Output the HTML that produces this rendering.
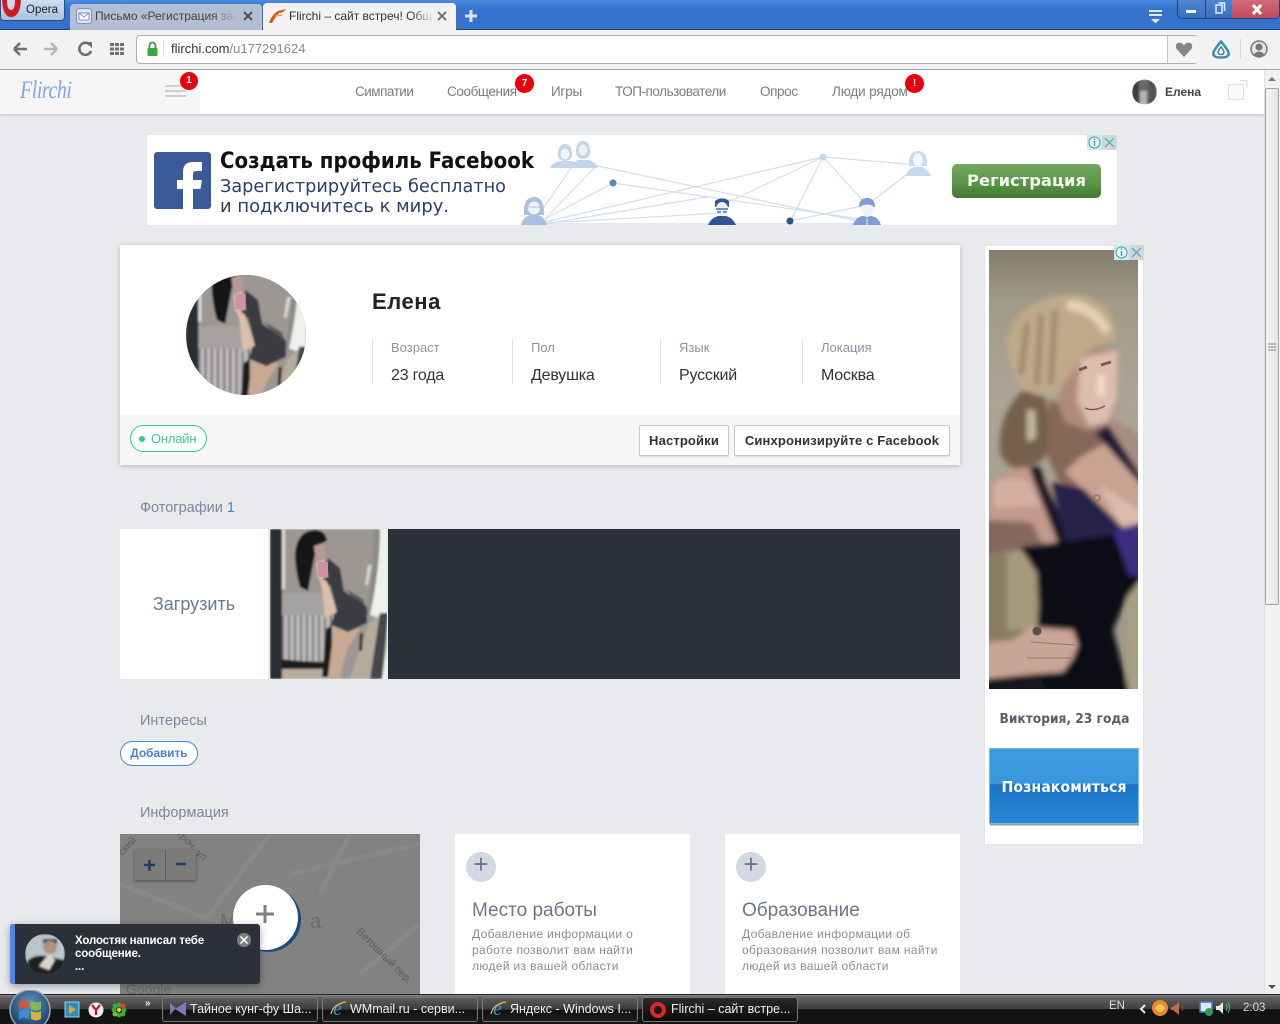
<!DOCTYPE html>
<html lang="ru"><head><meta charset="utf-8"><title>Flirchi</title>
<style>
html,body{margin:0;padding:0;width:1280px;height:1024px;overflow:hidden;background:#e8eaee;font-family:"Liberation Sans","Noto Sans CJK SC",sans-serif}
div,span,svg{position:absolute}
.t{white-space:nowrap;line-height:1}
.nav{top:84px;font-size:13.5px;color:#787d85;white-space:nowrap;line-height:15px;letter-spacing:-.4px}
.badge{width:18px;height:18px;border-radius:50%;background:#e8000f;color:#fff;font-size:10px;font-weight:bold;text-align:center;line-height:18px}
.lab{top:340px;font-size:13px;color:#8a94a6;line-height:15px;white-space:nowrap}
.val{top:367px;font-size:16px;color:#333;line-height:18px;white-space:nowrap;letter-spacing:-.2px}
.div{top:339px;width:1px;height:45px;background:#dfe2e6}
.btn{top:425px;height:29px;background:#fff;border:1px solid #c9c9c9;border-radius:2px;box-shadow:0 1px 1px #ddd;font-size:13px;font-weight:bold;color:#333;text-align:center;line-height:29px;white-space:nowrap;letter-spacing:.15px}
.sec{left:140px;font-size:14.5px;color:#7d8799;line-height:16px;white-space:nowrap}
.card{top:834px;width:235px;height:160px;background:#fff}
.plus{top:852px;width:30px;height:30px;border-radius:50%;background:#d3d9e2;color:#66768c;font-size:26px;line-height:25px;text-align:center}
.h{top:900px;font-size:19px;color:#6c7686;line-height:22px;white-space:nowrap}
.d{font-size:12px;color:#868e9c;line-height:16px;white-space:nowrap;letter-spacing:.35px;top:926px}
.win{top:997px;width:154px;height:23px;border:1px solid #777;border-radius:3px;background:linear-gradient(#5d5d5d 0,#3a3a3a 50%,#111 52%,#1c1c1c 100%)}
.wt{top:1003px;font-size:12.5px;color:#eee;white-space:nowrap;line-height:1}
.ic{width:15px;height:15px;top:135px;background:#cfdadd}
</style></head><body>

<!-- browser chrome -->
<div style="left:0;top:0;width:1280px;height:30px;background:linear-gradient(#4a8bdc 0,#3774cd 25%,#3470c9 100%);border-bottom:1px solid #20457c;box-sizing:border-box"></div>
<div style="left:0;top:0;width:65px;height:21px;background:linear-gradient(#cfdff2,#a9c0de);border:1px solid #2a4c80;border-top:0;border-radius:0 0 4px 4px;box-sizing:border-box"></div>
<svg style="left:0;top:0" width="24" height="20"><path d="M2 0 Q3 17 11 17 Q20 17 21 0 L15 0 Q15 10 11 10 Q7 10 7 0Z" fill="#d5171f"/></svg>
<div class="t" style="left:26px;top:5px;font-size:11.5px;color:#222">Opera</div>
<div style="left:70px;top:4px;width:192px;height:26px;background:#b2bfd2;border-radius:4px 4px 0 0"></div>
<svg style="left:76px;top:8px" width="16" height="16"><rect x=".5" y=".5" width="15" height="15" rx="3" fill="#dfe6f5" stroke="#7d8fc4"/><rect x="3" y="5" width="10" height="7" fill="#fff" stroke="#7d8fc4"/><path d="M3 5l5 4 5-4" fill="none" stroke="#7d8fc4"/></svg>
<div class="t" style="left:95px;top:10px;width:140px;overflow:hidden;font-size:12px;color:#444">Письмо «Регистрация зав</div>
<div style="left:212px;top:8px;width:25px;height:16px;background:linear-gradient(90deg,rgba(178,191,210,0),#b2bfd2)"></div>
<svg style="left:243px;top:11px" width="10" height="10"><path d="M1 1l8 8M9 1l-8 8" stroke="#555" stroke-width="2"/></svg>
<div style="left:263px;top:3px;width:193px;height:28px;background:#f2f2f2;border-radius:4px 4px 0 0"></div>
<svg style="left:269px;top:8px" width="17" height="15"><path d="M0 15 Q3 6 9 3 L17 1 Q14 5 10 5 Q7 8 3 15Z" fill="#e0521c"/><path d="M6 8 L13 7" stroke="#f0a030" stroke-width="1.5"/></svg>
<div class="t" style="left:289px;top:10px;width:145px;overflow:hidden;font-size:12px;color:#333">Flirchi – сайт встреч! Общ</div>
<div style="left:412px;top:8px;width:22px;height:16px;background:linear-gradient(90deg,rgba(242,242,242,0),#f2f2f2)"></div>
<svg style="left:437px;top:11px" width="10" height="10"><path d="M1 1l8 8M9 1l-8 8" stroke="#777" stroke-width="2"/></svg>
<svg style="left:465px;top:10px" width="12" height="12"><path d="M6 0v12M0 6h12" stroke="#d5e4f7" stroke-width="3"/></svg>
<svg style="left:1148px;top:10px" width="15" height="14"><path d="M1 1h13M1 5h13" stroke="#dbe8f8" stroke-width="2"/><path d="M3 9h9l-4.500 4.500z" fill="#dbe8f8"/></svg>
<div style="left:1177px;top:0;width:103px;height:19px;background:linear-gradient(#4c86d4,#3a6fc0);border:1px solid #20457c;border-top:0;border-radius:0 0 5px 5px;box-sizing:border-box"></div>
<div style="left:1232px;top:0;width:47px;height:18px;background:linear-gradient(#d26a78,#c44a5e);border-radius:0 0 4px 0"></div>
<div style="left:1205px;top:0;width:1px;height:18px;background:#20457c"></div>
<svg style="left:1185px;top:2px" width="90" height="14"><rect x="1" y="8" width="10" height="3" fill="#fff"/><rect x="31" y="3" width="6" height="8" fill="none" stroke="#e6eef8" stroke-width="1.500"/><path d="M33.500 1h6v8" fill="none" stroke="#e6eef8" stroke-width="1.500"/><path d="M68 3l8 9M76 3l-8 9" stroke="#fff" stroke-width="3"/></svg>

<div style="left:0;top:30px;width:1280px;height:40px;background:#f2f2f2;border-bottom:1px solid #a9a9a9;box-sizing:border-box"></div>
<svg style="left:13px;top:41px" width="115" height="16"><path d="M1 8h13M1 8l6-6M1 8l6 6" stroke="#6f6f6f" stroke-width="2.600" fill="none"/><path d="M44 8h-13M44 8l-6-6M44 8l-6 6" stroke="#b5b5b5" stroke-width="2.600" fill="none"/><path d="M77 4a6 6 0 1 0 1 6" stroke="#6f6f6f" stroke-width="2.600" fill="none"/><path d="M73 1h6v6z" fill="#6f6f6f"/><g fill="#6f6f6f"><rect x="97" y="2" width="4" height="3"/><rect x="102" y="2" width="4" height="3"/><rect x="107" y="2" width="4" height="3"/><rect x="97" y="6.500" width="4" height="3"/><rect x="102" y="6.500" width="4" height="3"/><rect x="107" y="6.500" width="4" height="3"/><rect x="97" y="11" width="4" height="3"/><rect x="102" y="11" width="4" height="3"/><rect x="107" y="11" width="4" height="3"/></g></svg>
<div style="left:136px;top:35px;width:1062px;height:29px;background:#fff;border:1px solid #b0b0b0;border-radius:4px;box-sizing:border-box"></div>
<div style="left:1167px;top:36px;width:30px;height:27px;background:#f4f4f4;border-left:1px solid #c4c4c4;border-radius:0 3px 3px 0"></div>
<svg style="left:146px;top:41px" width="13" height="16"><path d="M3.500 7V4.500a3 3 0 0 1 6 0V7" fill="none" stroke="#3a9a3e" stroke-width="1.800"/><rect x="1.500" y="7" width="10" height="8" rx="1" fill="#3aa63f"/></svg>
<div style="left:163px;top:41px;width:1px;height:16px;background:#ddd"></div>
<div class="t" style="left:171px;top:42px;font-size:13px;color:#333">flirchi.com<span style="position:static;color:#888">/u177291624</span></div>
<svg style="left:1175px;top:42px" width="18" height="15"><path d="M9 15 L1.500 7 Q-.5 2 3.500 .8 Q7 0 9 3.500 Q11 0 14.500 .8 Q18.500 2 16.500 7Z" fill="#858585"/></svg>
<svg style="left:1211px;top:39px" width="20" height="21"><path d="M10 2.500 Q14 7 17 12 Q20 18.500 10 18.500 Q0 18.500 3 12 Q6 7 10 2.500Z" fill="#eef4f5" stroke="#3f8ea2" stroke-width="2.500"/><path d="M10 8 Q12.500 11 13 13 Q13 15.500 10 15.500 Q7 15.500 7 13 Q7.500 11 10 8Z" fill="#f8f8f8" stroke="#4a7f96" stroke-width="1.500"/></svg>
<div style="left:1240px;top:39px;width:1px;height:20px;background:#d6d6d6"></div>
<svg style="left:1250px;top:40px" width="18" height="18"><circle cx="9" cy="9" r="8" fill="#e4e4e4" stroke="#777" stroke-width="1.500"/><circle cx="9" cy="7" r="3.500" fill="#777"/><path d="M3 15 Q9 8 15 15 Q9 18.500 3 15Z" fill="#777"/></svg>

<!-- site nav -->
<div style="left:0;top:70px;width:1264px;height:44px;background:#fff;box-shadow:0 1px 3px rgba(0,0,0,.18)"></div>
<div style="left:0;top:70px;width:200px;height:44px;background:#f6f6f6"></div>
<div class="t" style="left:20px;top:78px;font-family:'Liberation Serif',serif;font-style:italic;font-size:25px;color:#80a9e6;letter-spacing:-.6px;transform:scaleX(.8);transform-origin:0 0">Flirchi</div>
<svg style="left:165px;top:85px" width="21" height="12"><path d="M0 1h21M0 6h21M0 11h21" stroke="#cfcfcf" stroke-width="2"/></svg>
<div class="badge" style="left:180px;top:72px">1</div>
<div class="nav" style="left:355px;letter-spacing:-.5px">Симпатии</div>
<div class="nav" style="left:447px">Сообщения</div>
<div class="badge" style="left:515px;top:74px;width:19px;height:19px;line-height:19px">7</div>
<div class="nav" style="left:551px;letter-spacing:-.2px">Игры</div>
<div class="nav" style="left:615px;letter-spacing:-.45px">ТОП-пользователи</div>
<div class="nav" style="left:760px">Опрос</div>
<div class="nav" style="left:832px;letter-spacing:-.15px">Люди рядом</div>
<div class="badge" style="left:905px;top:74px;width:19px;height:19px;line-height:19px">!</div>
<svg style="left:1132px;top:79px" width="25" height="26"><defs><clipPath id="ua"><circle cx="12.500" cy="13" r="12.500"/></clipPath><filter id="ub"><feGaussianBlur stdDeviation="1"/></filter></defs><g clip-path="url(#ua)"><g filter="url(#ub)"><rect width="25" height="26" fill="#6b6b6b"/><rect x="0" y="0" width="7" height="26" fill="#3a3d42"/><rect x="8" y="12" width="7" height="14" fill="#b2b2b2"/><rect x="16" y="0" width="9" height="26" fill="#55575c"/></g></g></svg>
<div class="t" style="left:1165px;top:86px;font-size:12px;font-weight:bold;color:#444">Елена</div>
<svg style="left:1227px;top:80px" width="21" height="21"><rect x="1.500" y="4.500" width="15" height="15" fill="#fafafa" stroke="#e4e4e4"/><path d="M13 .5h7v7" fill="none" stroke="#ddd"/></svg>

<!-- top banner -->
<div style="left:147px;top:135px;width:970px;height:90px;background:#fff"></div>
<div style="left:154px;top:152px;width:57px;height:57px;background:#3d5a98;border-radius:3px"></div>
<svg style="left:154px;top:152px" width="57" height="57"><path d="M29 57V37H23V28H29V20Q29 10 39 10H48V19H42Q39 19 39 22V28H48L46.500 37H39V57Z" fill="#fff"/></svg>
<svg style="left:147px;top:135px" width="970" height="90">
<text x="73" y="33" font-family="DejaVu Sans" font-weight="bold" font-size="22" fill="#111" textLength="314" lengthAdjust="spacingAndGlyphs">Создать профиль Facebook</text>
<text x="73" y="57" font-family="DejaVu Sans" font-size="18" fill="#2b3f6c" textLength="286" lengthAdjust="spacingAndGlyphs">Зарегистрируйтесь бесплатно</text>
<text x="73" y="77" font-family="DejaVu Sans" font-size="18" fill="#2b3f6c" textLength="229" lengthAdjust="spacingAndGlyphs">и подключитесь к миру.</text>
<g stroke="#d3deed" stroke-width="1.200" fill="none">
<path d="M393 78L426 30M398 84L466 48M398 84L450 30M398 87L676 22M398 88L575 78M398 89L560 62M398 89H720M446 30L720 88M466 48L720 85M643 87L676 22M575 70L676 22M676 22L720 70M676 22L772 30M720 70L772 30M643 86L720 70"/>
</g>
<circle cx="466" cy="48" r="3.500" fill="#5b82bb"/>
<circle cx="676" cy="22" r="3.500" fill="#c4d6ec"/>
<circle cx="643" cy="86" r="3.500" fill="#2a4f8f"/>
<!-- pair -->
<g fill="#c3d5ec"><path d="M411 20Q411 9 418 9Q425 9 425 20Q425 25 418 26Q411 25 411 20Z"/><path d="M429 17Q429 6 436 6Q443 6 443 17Q443 23 436 24Q429 23 429 17Z"/><path d="M403 33Q406 27 414 26H424Q430 27 433 33ZM424 31Q428 26 431 25H441Q448 26 451 33H424Z"/></g>
<g fill="#edf3fa"><ellipse cx="418" cy="19" rx="4.500" ry="5.500"/><ellipse cx="436" cy="15" rx="4.500" ry="5.500"/></g>
<!-- woman left -->
<g fill="#a9c0e2"><path d="M377 80Q376 62 387 62Q398 62 397 80Z"/><path d="M374 90Q376 82 383 80H391Q398 82 400 90Z"/></g>
<ellipse cx="387" cy="73" rx="6" ry="6.500" fill="#eef3fa"/>
<path d="M381 72h12" stroke="#a9c0e2"/>
<!-- man dark -->
<g fill="#2f5596"><path d="M568 72V66Q575 61 582 66V72Z"/><path d="M561 90Q564 83 571 81H579Q586 83 589 90Z"/></g>
<ellipse cx="575" cy="74" rx="6" ry="7" fill="#eaf0f8"/>
<path d="M568 69Q575 64 582 69V66Q575 61 568 66Z" fill="#2f5596"/>
<path d="M569 74h12M570 77h4M576 77h4" stroke="#2f5596" stroke-width="1.300"/>
<!-- man mid -->
<g fill="#7e9ed2"><path d="M706 90Q708 83 715 81H725Q732 83 734 90Z"/><path d="M712 72Q712 63 720 63Q728 63 728 72Z"/></g>
<path d="M714 71Q720 68 726 71V76Q724 82 720 82Q716 82 714 76Z" fill="#eef3fa"/>
<rect x="719.500" y="83" width="1" height="7" fill="#eef3fa"/>
<!-- woman right -->
<g fill="#c8d9ef"><path d="M762 31Q761 16 771 16Q781 16 780 31Z"/><path d="M758 41Q761 34 767 32H775Q781 34 784 41Z"/></g>
<ellipse cx="771" cy="25" rx="5" ry="6.500" fill="#f3f7fc"/>
<defs><linearGradient id="gb" x1="0" y1="0" x2="0" y2="1"><stop offset="0" stop-color="#74a95f"/><stop offset=".6" stop-color="#5a9246"/><stop offset="1" stop-color="#3f7a30"/></linearGradient></defs>
<rect x="805" y="29" width="149" height="34" rx="5" fill="url(#gb)"/>
<text x="820" y="51" font-family="DejaVu Sans" font-weight="bold" font-size="16" fill="#f2f7ee" textLength="119" lengthAdjust="spacingAndGlyphs">Регистрация</text>
</svg>
<div class="ic" style="left:1087px;background:#d5e6ea"></div><div class="ic" style="left:1102px;background:#d4d6d8"></div>
<svg style="left:1087px;top:135px" width="30" height="15"><circle cx="7.500" cy="7.500" r="5.500" fill="#f0fbfd" stroke="#33a7bb"/><path d="M7.500 6v5M7.500 3.500v1.500" stroke="#33a7bb" stroke-width="1.500"/><path d="M18 3l9 9M27 3l-9 9" stroke="#39aebf" stroke-width="1.200"/></svg>

<!-- profile card -->
<div style="left:120px;top:245px;width:840px;height:220px;background:#fff;box-shadow:0 1px 5px rgba(0,0,0,.22)"></div>
<div style="left:120px;top:415px;width:840px;height:50px;background:#f6f6f6"></div>
<svg width="0" height="0" style="left:0;top:0"><defs>
<filter id="b1" x="-5%" y="-5%" width="110%" height="110%"><feGaussianBlur stdDeviation="1.100"/></filter>
<filter id="b2" x="-5%" y="-5%" width="110%" height="110%"><feGaussianBlur stdDeviation="2.600"/></filter>
<pattern id="st" width="6" height="6" patternUnits="userSpaceOnUse"><rect width="6" height="6" fill="#bdbabc"/><rect width="2" height="6" fill="#77747a"/></pattern>
<g id="selfie">
<g filter="url(#b1)">
<rect width="117" height="150" fill="#9c9793"/>
<path d="M104 0H117V92L96 86Q104 40 104 0Z" fill="#8e8a86"/>
<path d="M110 0H117V92L100 86Q110 40 110 0Z" fill="#eef0ee"/>
<path d="M98 36L102 36L98 56L95 56Z" fill="#d6d4d0"/>
<path d="M76 60L93 70L98 85L90 78Z" fill="#5a585a"/>
<rect x="10" y="64" width="56" height="26" fill="#a5a2a2"/>
<rect x="10" y="86" width="54" height="46" fill="url(#st)"/>
<path d="M10 130Q35 133 60 133L62 143L10 140Z" fill="#1b1a1d"/>
<path d="M10 140H60V150H10Z" fill="#b8ad9e"/>
<path d="M80 150L98 96L112 84L117 90V150Z" fill="#b5ab9c"/>
<path d="M100 150L110 84L118 84L112 150Z" fill="#44474e"/>
<path d="M112 150L118 112V150Z" fill="#eef0ee"/>
<path d="M90 104L93 104L92 122L89 122Z" fill="#262528"/>
<path d="M63 96L90 100L78 119Q72 135 70 149H57Q58 120 60 116Z" fill="#c9a994"/>
<path d="M56 100L62 96L62 116L58 148H52Z" fill="#1b1a1c"/>
<path d="M58 29L70 39L74 62L97 78L97 94L78 103L61 96L66 79L60 56L52 56Z" fill="#3b3a42"/>
<path d="M48 46L57 53L67 83L55 89L52 59Z" fill="#dcbfaa"/>
<path d="M46 34L54 30L58 48L48 50Z" fill="#d9bca8"/>
<path d="M25 25Q27 1 46 1Q56 2 57 12L48 16L44 30L38 62L30 58Q25 40 25 25Z" fill="#141417"/>
<path d="M44 17L54 14L56 28L46 32Z" fill="#b59c92"/>
<rect x="0" y="0" width="12" height="150" fill="#2b2e33"/>
<rect x="12" y="0" width="3" height="60" fill="#dcdcdc"/>
</g>
<rect x="48" y="33" width="10" height="15" rx="1" fill="#cc93a0"/>
</g>
</defs></svg>
<svg style="left:186px;top:275px" width="120" height="120"><defs><clipPath id="ca"><circle cx="60" cy="60" r="60"/></clipPath></defs><g clip-path="url(#ca)"><rect width="120" height="120" fill="#8c8a8a"/><g transform="translate(0,-15) scale(1.030)"><use href="#selfie"/></g></g></svg>
<div class="t" style="left:372px;top:291px;font-size:22px;font-weight:bold;color:#222;letter-spacing:.55px">Елена</div>
<div class="div" style="left:372px"></div><div class="div" style="left:512px"></div><div class="div" style="left:660px"></div><div class="div" style="left:802px"></div>
<div class="lab" style="left:391px">Возраст</div><div class="val" style="left:391px">23 года</div>
<div class="lab" style="left:531px">Пол</div><div class="val" style="left:531px">Девушка</div>
<div class="lab" style="left:679px">Язык</div><div class="val" style="left:679px">Русский</div>
<div class="lab" style="left:821px">Локация</div><div class="val" style="left:821px">Москва</div>
<div style="left:130px;top:425px;width:75px;height:25px;border:1px solid #2fcb93;border-radius:14px;background:#fff"></div>
<div style="left:139px;top:436px;width:6px;height:6px;border-radius:50%;background:#2fcb93"></div>
<div class="t" style="left:151px;top:432px;font-size:13px;color:#41c795;letter-spacing:-.2px">Онлайн</div>
<div class="btn" style="left:639px;width:88px">Настройки</div>
<div class="btn" style="left:734px;width:214px">Синхронизируйте с Facebook</div>

<!-- photos -->
<div class="sec" style="top:500px">Фотографии <span style="position:static;color:#4a80c8">1</span></div>
<div style="left:120px;top:529px;width:148px;height:150px;background:#fff;color:#6b7a90;font-size:18px;text-align:center;line-height:150px">Загрузить</div>
<svg style="left:270px;top:529px" width="117" height="150"><use href="#selfie"/></svg>
<div style="left:388px;top:529px;width:572px;height:150px;background:#2c3038"></div>

<div class="sec" style="top:713px">Интересы</div>
<div style="left:120px;top:741px;width:76px;height:23px;border:1px solid #4a8ae0;border-radius:13px;background:#fff;color:#4a80d0;font-size:11.800px;font-weight:bold;text-align:center;line-height:23px">Добавить</div>
<div class="sec" style="top:805px">Информация</div>

<!-- map -->
<div style="left:120px;top:834px;width:300px;height:160px;background:#828282;overflow:hidden">
<svg style="left:0;top:0" width="300" height="160"><g stroke="#888" stroke-width="5" fill="none"><path d="M0 50L100 90M60 120L150 0M170 40L300 10M230 0L200 60M300 90L240 140"/></g>
<text x="100" y="94" font-size="20" fill="#6a6a6a" font-family="Liberation Sans">М</text>
<text x="190" y="94" font-size="20" fill="#6a6a6a" font-family="Liberation Sans">а</text>
<text transform="translate(236,98) rotate(45)" font-size="10.500" fill="#5e5e5e" font-family="Liberation Sans">Ветошный пер.</text>
<text transform="translate(56,0) rotate(45)" font-size="10.500" fill="#5e5e5e" font-family="Liberation Sans">троч. ул</text>
<text transform="translate(2,22) rotate(-45)" font-size="10.500" fill="#5e5e5e" font-family="Liberation Sans">ский</text>
<text x="6" y="160" font-size="14" fill="#6a6a6a" font-family="Liberation Sans">Google</text>
</svg>
<div style="left:15px;top:16px;width:61px;height:30px;background:#7c7c7c;box-shadow:0 1px 3px rgba(0,0,0,.4)"></div>
<div style="left:45px;top:16px;width:1px;height:30px;background:#5f5f5f"></div>
<svg style="left:22px;top:23px" width="48" height="16"><path d="M2 8h11M7.500 3v11" stroke="#1d3e66" stroke-width="2.500"/><path d="M34 7h10" stroke="#1d3e66" stroke-width="2.500"/></svg>
<div style="left:116px;top:53px;width:65px;height:65px;border-radius:50%;background:#1d4d7c"></div>
<div style="left:113px;top:51px;width:65px;height:65px;border-radius:50%;background:#fff"></div>
<svg style="left:136px;top:71px" width="18" height="18"><path d="M0 9h18M9 0v18" stroke="#7e7e7e" stroke-width="3"/></svg>
</div>

<div class="card" style="left:455px"></div>
<div class="plus" style="left:466px">+</div>
<div class="h" style="left:472px">Место работы</div>
<div class="d" style="left:472px">Добавление информации о<br>работе позволит вам найти<br>людей из вашей области</div>
<div class="card" style="left:725px"></div>
<div class="plus" style="left:736px">+</div>
<div class="h" style="left:742px">Образование</div>
<div class="d" style="left:742px">Добавление информации об<br>образования позволит вам найти<br>людей из вашей области</div>

<!-- side ad -->
<div style="left:985px;top:246px;width:158px;height:598px;background:#fff;box-shadow:0 0 1px #ccd"></div>
<svg style="left:989px;top:250px" width="149" height="439" viewBox="0 0 149 439">
<defs><clipPath id="ad"><rect width="149" height="439"/></clipPath>
<linearGradient id="wall" x1="0" y1="0" x2="0" y2="1"><stop offset="0" stop-color="#857d6b"/><stop offset=".12" stop-color="#a29b89"/><stop offset=".35" stop-color="#aaa595"/><stop offset="1" stop-color="#9c9684"/></linearGradient></defs>
<g clip-path="url(#ad)">
<rect width="149" height="439" fill="url(#wall)"/>
<g filter="url(#b2)">
<!-- lower wall -->
<rect x="-5" y="295" width="55" height="100" fill="#8a7d62"/>
<rect x="18" y="300" width="30" height="80" fill="#a6997c"/>
<path d="M138 340L155 330V445H138Z" fill="#a89f84"/>
<!-- ponytail -->
<path d="M34 140Q8 165 11 203Q20 222 36 218Q60 212 60 195Q62 170 56 148Z" fill="#75604c"/>
<path d="M38 160L46 160L47 188L38 192Z" fill="#c4b9a4"/>
<!-- neck / shadow -->
<path d="M60 150L58 205L70 232L120 250L132 205L120 170Z" fill="#85685a"/>
<!-- right shoulder -->
<path d="M118 170Q144 172 155 200L155 232L122 195Z" fill="#a88c80"/>
<!-- chest -->
<path d="M90 208L118 192L155 235V282L134 278L94 240L76 222Z" fill="#c9a292"/>
<path d="M110 235L155 262V280L132 276Z" fill="#dcbbac"/>
<!-- left arm -->
<path d="M-5 237Q16 220 34 217Q52 222 60 232L76 296L74 302L30 298L-5 304Z" fill="#c29a8b"/>
<path d="M-5 270L42 272L56 298L-5 304Z" fill="#85695b"/>
<path d="M5 232Q25 225 40 232L50 255L5 258Z" fill="#d5b0a1"/>
<!-- face -->
<path d="M98 98L129 98L129 150L118 175L100 181L76 172L68 150L82 120Z" fill="#b28a7a"/>
<path d="M92 108L129 100L128 148L118 172L100 176L88 150Z" fill="#dcbdae"/>
<path d="M108 125L116 125L116 146L108 146Z" fill="#f0dacd"/>
<!-- hair -->
<path d="M84 44Q118 48 124 72L128 90L110 95Q95 100 84 122L64 145L34 141Q24 125 22 115Q14 90 22 78Q35 48 84 44Z" fill="#bfa988"/>
<path d="M38 72L32 125M52 64L48 135M66 60L62 135" stroke="#937a5e" stroke-width="4" fill="none"/>
<path d="M78 55Q105 56 118 82" stroke="#e2d3b6" stroke-width="10" fill="none"/>
<!-- straps & dress -->
<path d="M106 183L119 175L155 230V238Z" fill="#1c1a38"/>
<path d="M40 218L50 216L84 296L70 296Z" fill="#1d1825"/>
<path d="M62 232L94 238L134 278L155 281V300L80 300Z" fill="#25204a"/>
<path d="M31 297L124 285L155 285L155 325L138 347L124 380L141 445H-5L-5 428L44 423L50 357L48 323Z" fill="#0e0a14"/>
<path d="M124 280L155 272V328L140 325Z" fill="#3c2f80"/>
<!-- hand -->
<path d="M-5 393L24 390L41 377L84 380L89 395L84 408L74 422L44 424L-5 429Z" fill="#c9a596"/>
<path d="M-5 430L50 425L60 445H-5Z" fill="#17121a"/>
</g>
<path d="M42 392L86 395M38 408L82 408" stroke="#8f6e62" stroke-width="1.200" opacity=".7"/>
<path d="M90 120l8 -3M112 115l10 -3" stroke="#3a2c28" stroke-width="3" opacity=".65"/>
<path d="M96 158Q104 162 116 156" stroke="#7e5a50" stroke-width="1.500" fill="none"/>
<circle cx="108" cy="248" r="3" fill="none" stroke="#7e6f60"/>
<circle cx="48" cy="381" r="4.500" fill="#55544a"/>
</g></svg>
<div class="ic" style="left:1114px;top:245px;background:#d5e6ea"></div><div class="ic" style="left:1129px;top:245px;background:#d4d6d8"></div>
<svg style="left:1114px;top:245px" width="30" height="15"><circle cx="7.500" cy="7.500" r="5.500" fill="#f0fbfd" stroke="#33a7bb"/><path d="M7.500 6v5M7.500 3.500v1.500" stroke="#33a7bb" stroke-width="1.500"/><path d="M18 3l9 9M27 3l-9 9" stroke="#39aebf" stroke-width="1.200"/></svg>
<svg style="left:985px;top:700px" width="158" height="130">
<text x="14.500" y="23" font-family="DejaVu Sans" font-weight="bold" font-size="13.500" fill="#555e6a" textLength="130" lengthAdjust="spacingAndGlyphs">Виктория, 23 года</text>
<defs><linearGradient id="bl" x1="0" y1="0" x2="0" y2="1"><stop offset="0" stop-color="#3f9be0"/><stop offset=".47" stop-color="#3a96dc"/><stop offset=".48" stop-color="#1a72c8"/><stop offset="1" stop-color="#2a88d4"/></linearGradient></defs>
<rect x="4.500" y="48.500" width="149" height="75" fill="url(#bl)" stroke="#70bde8"/>
<rect x="5" y="124" width="149" height="1.500" fill="#9a9a9a"/>
<text x="16.500" y="92" font-family="DejaVu Sans" font-weight="bold" font-size="15.500" fill="#fff" textLength="125" lengthAdjust="spacingAndGlyphs">Познакомиться</text>
</svg>

<!-- scrollbar -->
<div style="left:1264px;top:70px;width:16px;height:924px;background:#f0f0f0;border-left:1px solid #e0e0e0;box-sizing:border-box"></div>
<div style="left:1265px;top:88px;width:14px;height:517px;background:linear-gradient(90deg,#f4f4f4,#e4e4e4);border:1px solid #a5a5a5;border-radius:2px;box-sizing:border-box"></div>
<svg style="left:1267px;top:75px" width="10" height="8"><path d="M1 6l4-4 4 4z" fill="#777"/></svg>
<svg style="left:1267px;top:983px" width="10" height="8"><path d="M1 2l4 4 4-4z" fill="#555"/></svg>
<svg style="left:1268px;top:343px" width="8" height="8"><path d="M0 1h8M0 4h8M0 7h8" stroke="#8a8a8a"/></svg>

<!-- notification -->
<div style="left:10px;top:924px;width:250px;height:60px;background:#2c3038;border-radius:3px;box-shadow:0 2px 8px rgba(0,0,0,.35);overflow:hidden"><div style="left:0;top:0;width:5px;height:60px;background:#4a88f0"></div></div>
<svg style="left:25px;top:934px" width="40" height="40"><defs><clipPath id="na"><circle cx="20" cy="20" r="20"/></clipPath></defs><g clip-path="url(#na)"><g filter="url(#b1)"><rect width="40" height="40" fill="#b9c4cc"/><path d="M2 40V27Q10 20 20 22L40 26V40Z" fill="#1d2024"/><circle cx="25" cy="13" r="7" fill="#b0907e"/><path d="M18 10Q25 3 32 10L32 5H18Z" fill="#2a2c30"/><path d="M14 32L24 20L30 26L24 36Z" fill="#dcd6d0"/></g></g></svg>
<div style="left:75px;top:935px;width:150px;font-size:11.500px;font-weight:bold;color:#fff;line-height:13px;letter-spacing:-.15px">Холостяк написал тебе сообщение.<br>...</div>
<div style="left:237px;top:933px;width:14px;height:14px;border-radius:50%;background:#7f7f7f"></div>
<svg style="left:240px;top:936px" width="8" height="8"><path d="M.5 .5l7 7M7.500 .5l-7 7" stroke="#fff" stroke-width="1.500"/></svg>

<!-- taskbar -->
<div style="left:0;top:994px;width:1280px;height:30px;background:linear-gradient(#8a8a8a 0,#606060 8%,#3e3e3e 48%,#111 50%,#151515 100%);border-top:1px solid #222;box-sizing:border-box"></div>
<svg style="left:8px;top:990px" width="44" height="34"><defs><radialGradient id="orb" cx=".5" cy=".35" r=".7"><stop offset="0" stop-color="#5d9bd0"/><stop offset="1" stop-color="#10304e"/></radialGradient></defs><circle cx="22" cy="20" r="20" fill="url(#orb)" stroke="#9aa5ad" stroke-width="1.500"/><g opacity=".85"><path d="M11 12Q15 8 21 11V19Q15 16 11 20Z" fill="#e2522c"/><path d="M23 11Q28 14 33 11V19Q28 22 23 19Z" fill="#8cc63e"/><path d="M11 22Q15 18 21 21V29Q15 26 11 30Z" fill="#3e92dc"/><path d="M23 21Q28 24 33 21V29Q28 32 23 29Z" fill="#f2c02e"/></g></svg>
<svg style="left:64px;top:1001px" width="66" height="18"><rect x="1" y="1" width="14" height="15" fill="#2a8ec4" stroke="#9ad0ea"/><path d="M5 4l7 4.500-7 4.500z" fill="#f2a020"/><circle cx="32" cy="9" r="7.500" fill="#f4eeee"/><path d="M28 4l4 5 4-5M32 9v5" stroke="#c8102e" stroke-width="2.200" fill="none"/><g fill="#3aa83a"><circle cx="55" cy="4" r="2.500"/><circle cx="55" cy="14" r="2.500"/><circle cx="50" cy="9" r="2.500"/><circle cx="60" cy="9" r="2.500"/><circle cx="51" cy="5" r="2.500"/><circle cx="59" cy="13" r="2.500"/></g><circle cx="59" cy="5" r="2.500" fill="#e0362c"/><circle cx="51" cy="13" r="2.500" fill="#6cc040"/><circle cx="55" cy="9" r="2" fill="#f2d020"/></svg>
<div class="t" style="left:145px;top:999px;font-size:10px;font-weight:bold;color:#eee">»</div>
<div class="win" style="left:162px"></div>
<svg style="left:170px;top:1002px" width="16" height="14"><path d="M0 1L6 6 0 13ZM16 0V14L5 7Z" fill="#8a72b8"/></svg>
<div class="wt" style="left:190px">Тайное кунг-фу Ша...</div>
<div class="win" style="left:322px"></div>
<svg style="left:330px;top:1000px" width="18" height="18"><text x="3" y="15" font-family="Liberation Serif" font-style="italic" font-size="20" fill="#3b9ae0">e</text><path d="M1 14Q3 4 16 2" stroke="#e9b93c" stroke-width="1.200" fill="none"/></svg>
<div class="wt" style="left:350px">WMmail.ru - серви...</div>
<div class="win" style="left:482px"></div>
<svg style="left:490px;top:1000px" width="18" height="18"><text x="3" y="15" font-family="Liberation Serif" font-style="italic" font-size="20" fill="#3b9ae0">e</text><path d="M1 14Q3 4 16 2" stroke="#e9b93c" stroke-width="1.200" fill="none"/></svg>
<div class="wt" style="left:510px">Яндекс - Windows I...</div>
<div class="win" style="left:642px;background:linear-gradient(#2a2a2a,#0a0a0a)"></div>
<svg style="left:650px;top:1002px" width="16" height="16"><circle cx="8" cy="8" r="6" fill="none" stroke="#d8281f" stroke-width="4"/></svg>
<div class="wt" style="left:671px">Flirchi – сайт встре...</div>
<div class="t" style="left:1109px;top:1001px;font-size:11.500px;color:#ddd">EN</div>
<svg style="left:1136px;top:998px" width="110" height="22"><path d="M9 7l-4 4 4 4" stroke="#eee" stroke-width="2" fill="none"/><circle cx="24" cy="10" r="8" fill="#e88a2a"/><path d="M19 10Q24 2 29 10Q24 18 19 10" fill="#f7c060"/><path d="M35 9h2l6-5v13l-6-5h-2z" fill="#c06a45"/><path d="M46 7q2 3 0 6" stroke="#a33" fill="none"/><rect x="64" y="4" width="12" height="10" fill="#dbe8f8" stroke="#3a78c8" stroke-width="1.500"/><circle cx="73" cy="14" r="4" fill="#2f9c5e"/><path d="M80 8h3l4-4v12l-4-4h-3z" fill="#e8e8e8"/><path d="M90 6q2 4 0 7M92 4q3 6 0 11" stroke="#58c060" fill="none"/></svg>
<div class="t" style="left:1243px;top:1003px;font-size:11.500px;color:#ddd">2:03</div>
</body></html>
